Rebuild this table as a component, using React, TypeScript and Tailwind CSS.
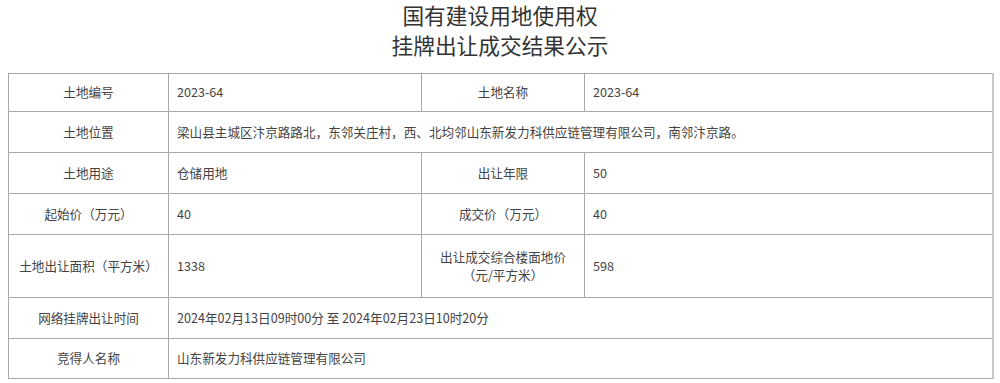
import React from "react"

const font = { fontFamily: '"Noto Sans CJK SC", "Noto Sans", sans-serif' }

const label = "border border-[#a8a8a8] text-center align-middle px-2 text-[12.6px] text-[#444] font-normal"
const value = "border border-[#a8a8a8] text-left align-middle px-2 text-[12.6px] text-[#444]"

export default function App() {
  return (
    <div className="w-[1000px] h-[383px] bg-white overflow-hidden" style={font}>
      <h1 className="text-center text-[21.7px] leading-[30px] text-[#333] font-normal">
        国有建设用地使用权
        <br />
        挂牌出让成交结果公示
      </h1>

      <table className="mt-[13px] ml-[8px] w-[986px] border-collapse table-fixed border-r-2 border-r-[#c8c8c8]">
        <colgroup>
          <col className="w-[160px]" />
          <col className="w-[253px]" />
          <col className="w-[163px]" />
          <col />
        </colgroup>
        <tbody>
          <tr className="h-[38px]">
            <td className={label}>土地编号</td>
            <td className={value}>2023-64</td>
            <td className={label}>土地名称</td>
            <td className={value}>2023-64</td>
          </tr>
          <tr className="h-[41px]">
            <td className={label}>土地位置</td>
            <td className={value} colSpan={3}>
              梁山县主城区汴京路路北，东邻关庄村，西、北均邻山东新发力科供应链管理有限公司，南邻汴京路。
            </td>
          </tr>
          <tr className="h-[41px]">
            <td className={label}>土地用途</td>
            <td className={value}>仓储用地</td>
            <td className={label}>出让年限</td>
            <td className={value}>50</td>
          </tr>
          <tr className="h-[41px]">
            <td className={label}>起始价（万元）</td>
            <td className={value}>40</td>
            <td className={label}>成交价（万元）</td>
            <td className={value}>40</td>
          </tr>
          <tr className="h-[63px]">
            <td className={label}>土地出让面积（平方米）</td>
            <td className={value}>1338</td>
            <td className={label + " leading-[18px]"}>
              出让成交综合楼面地价
              <br />
              （元/平方米）
            </td>
            <td className={value}>598</td>
          </tr>
          <tr className="h-[41px]">
            <td className={label}>网络挂牌出让时间</td>
            <td className={value} colSpan={3}>
              2024年02月13日09时00分 至 2024年02月23日10时20分
            </td>
          </tr>
          <tr className="h-[40px]">
            <td className={label}>竞得人名称</td>
            <td className={value} colSpan={3}>
              山东新发力科供应链管理有限公司
            </td>
          </tr>
        </tbody>
      </table>
    </div>
  )
}
